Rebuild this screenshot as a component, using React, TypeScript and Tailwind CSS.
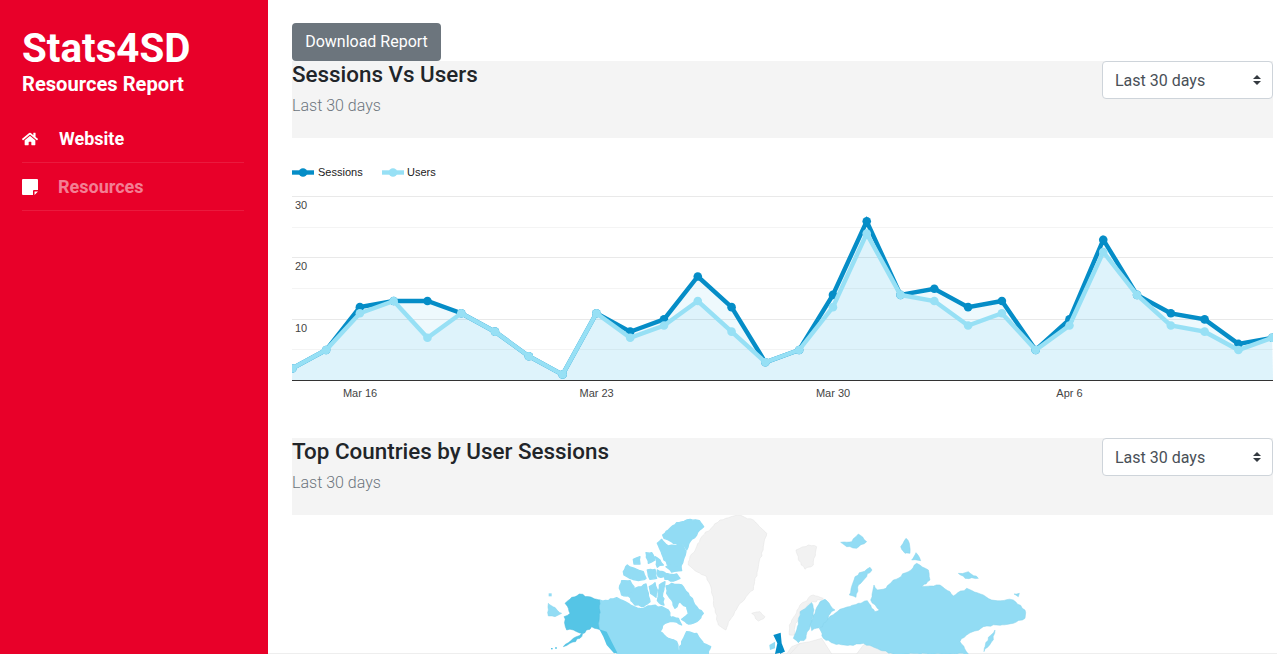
import { FaHome } from "react-icons/fa";

const SESSIONS = [2, 5, 12, 13, 13, 11, 8, 4, 1, 11, 8, 10, 17, 12, 3, 5, 14, 26, 14, 15, 12, 13, 5, 10, 23, 14, 11, 10, 6, 7];
const USERS = [2, 5, 11, 13, 7, 11, 8, 4, 1, 11, 7, 9, 13, 8, 3, 5, 12, 24, 14, 13, 9, 11, 5, 9, 21, 14, 9, 8, 5, 7];

const STEP = 33.79;
const px = (i: number) => 0.3 + i * STEP;
const py = (v: number) => 242.7 - v * 6.13;
const line = (vals: number[]) => vals.map((v, i) => `${px(i).toFixed(1)},${py(v).toFixed(1)}`).join(" ");

// traced from the reference, numbers are 3x crop coords (see the g transforms)
const NORTH_AMERICA = [
  "178,270 205,272 230,263 255,275 282,290 310,296 335,287 365,290 385,300 392,322 415,325 425,345 400,335 375,340 360,365 385,385 410,395 415,425 425,395 440,365 470,370 490,400 512,410 505,432 232,432 210,400 190,365 178,358",
  "368,75 385,60 410,38 440,30 478,32 491,50 470,75 450,95 440,120 425,100 400,100 385,90 372,85",
  "352,100 365,88 385,108 425,103 438,125 430,150 420,180 395,175 372,150",
  "378,228 395,220 425,225 445,250 470,290 490,310 470,335 445,342 425,328 445,312 440,290 420,275 405,295 395,270 380,250",
  "238,235 245,212 270,212 282,230 280,245 262,258 245,255",
  "265,258 285,235 305,230 318,222 325,250 330,275 310,290 285,285",
  "328,230 345,218 352,240 348,262 332,250",
  "358,225 375,215 368,250 372,285 352,272",
  "250,185 262,165 290,178 310,185 318,205 295,212 270,205 252,195",
  "322,180 345,178 350,205 330,208",
  "352,180 375,188 372,200 355,200",
  "370,190 410,192 420,205 400,213 375,208",
  "378,170 420,165 425,182 395,186",
  "318,128 335,128 345,150 325,160",
  "345,140 360,150 370,165 352,172",
  "280,148 300,140 300,162 282,162",
];

const RUSSIA_AREA = [
  "118,355 135,330 165,310 190,295 235,280 262,272 275,295 285,305 298,300 272,270 282,225 292,240 318,235 340,210 385,185 410,160 445,180 450,210 425,230 480,225 510,245 520,258 560,235 610,255 635,270 700,270 735,300 735,325 700,340 650,345 610,350 560,375 540,395 565,432 340,432 300,420 250,400 210,405 160,400 130,385",
  "208,255 225,200 270,172 276,180 235,225 228,262",
  "362,110 378,85 388,100 390,130 375,130",
  "395,150 408,128 422,152",
  "182,97 215,95 235,72 260,95 230,115 200,110",
  "535,190 565,185 595,205 555,205",
  "612,425 625,382 645,360 640,390",
  "702,252 718,250 715,260",
  "105,310 120,275 135,268 165,300 150,312 128,350 95,362 90,345",
  "60,305 95,278 102,300 95,335 78,385 55,398 40,385 52,350",
];

// breaks long edges up so the coast looks less like straight cuts
function rough(points: string): string {
  const pts = points.split(" ").map((p) => p.split(",").map(Number));
  const out: string[] = [];
  pts.forEach(([x, y], i) => {
    const [nx, ny] = pts[(i + 1) % pts.length];
    const n = Math.max(1, Math.round(Math.hypot(nx - x, ny - y) / 9));
    for (let k = 0; k < n; k++) {
      const t = k / n;
      const seed = Math.sin((x + k) * 12.9898 + (y + k) * 78.233) * 43758.5453;
      const j = k === 0 ? 0 : (seed - Math.floor(seed) - 0.5) * 5;
      const jy = k === 0 ? 0 : ((seed * 7 - Math.floor(seed * 7)) - 0.5) * 5;
      out.push(`${(x + (nx - x) * t + j).toFixed(1)},${(y + (ny - y) * t + jy).toFixed(1)}`);
    }
  });
  return out.join(" ");
}

function ChartBlock() {
  const area = `0,242 ${line(USERS)} 981,242`;
  const areaSessions = `0,242 ${line(SESSIONS)} 981,242`;
  return (
    <svg width="981" height="300" viewBox="0 0 981 300" className="block" fontFamily="'Liberation Sans', Arial, sans-serif" fontSize="11">
      <line x1="0" x2="22" y1="34.5" y2="34.5" stroke="#058dc7" strokeWidth="4.4" />
      <circle cx="11" cy="34.5" r="4.3" fill="#058dc7" />
      <text x="26" y="38" fill="#222">Sessions</text>
      <line x1="90" x2="112" y1="34.5" y2="34.5" stroke="#97e0f5" strokeWidth="4.4" />
      <circle cx="101" cy="34.5" r="4.3" fill="#97e0f5" />
      <text x="115" y="38" fill="#222">Users</text>

      {[58.5, 119.5, 181.5].map((y) => (
        <line key={y} x1="0" x2="981" y1={y} y2={y} stroke="#e9e9e9" />
      ))}
      {[89.5, 150.5, 211.5].map((y) => (
        <line key={y} x1="0" x2="981" y1={y} y2={y} stroke="#f4f4f4" />
      ))}

      <polygon points={areaSessions} fill="#0ea5e0" fillOpacity="0.07" />
      <polygon points={area} fill="#0ea5e0" fillOpacity="0.07" />

      <polyline points={line(SESSIONS)} fill="none" stroke="#058dc7" strokeWidth="4.4" />
      {SESSIONS.map((v, i) => (
        <circle key={i} cx={px(i)} cy={py(v)} r="4.3" fill="#058dc7" />
      ))}
      <polyline points={line(USERS)} fill="none" stroke="#97e0f5" strokeWidth="4.4" />
      {USERS.map((v, i) => (
        <circle key={i} cx={px(i)} cy={py(v)} r="4.3" fill="#97e0f5" />
      ))}

      <line x1="0" x2="981" y1="242.5" y2="242.5" stroke="#333" strokeWidth="1" />

      <text x="3" y="71" fill="#444">30</text>
      <text x="3" y="132" fill="#444">20</text>
      <text x="3" y="194" fill="#444">10</text>
      <text x="68" y="259" fill="#444" textAnchor="middle">Mar 16</text>
      <text x="304.6" y="259" fill="#444" textAnchor="middle">Mar 23</text>
      <text x="541" y="259" fill="#444" textAnchor="middle">Mar 30</text>
      <text x="777.5" y="259" fill="#444" textAnchor="middle">Apr 6</text>
    </svg>
  );
}

function WorldMap() {
  return (
    <svg width="981" height="139" viewBox="292 515 981 139" className="block">
      <g transform="translate(540 510) scale(0.33333)" strokeWidth="1.5">
        <polygon
          points={rough("445,155 450,140 470,110 485,80 540,30 600,15 640,30 680,70 670,110 655,170 640,240 600,280 570,330 558,360 535,345 520,280 515,240 500,200 470,185 445,165")}
          fill="#f2f2f2"
          stroke="#e2e2e2"
        />
        <polygon points={rough("635,310 660,305 675,320 655,333")} fill="#f2f2f2" stroke="#e2e2e2" />
        {NORTH_AMERICA.map((p) => (
          <polygon key={p} points={rough(p)} fill="#92dcf4" stroke="#92dcf4" strokeWidth="4" strokeLinejoin="round" />
        ))}
        <polygon points="178,358 200,365 215,395 232,428 222,430 200,405 190,380" fill="#55c5e6" />
        <polygon points={rough("25,280 65,310 45,320 25,318")} fill="#92dcf4" stroke="#86d2ea" />
        <rect x="26" y="250" width="9" height="9" fill="#92dcf4" />
        <rect x="33" y="414" width="5" height="4" fill="#55c5e6" />
        <rect x="45" y="412" width="6" height="4" fill="#55c5e6" />
        <polygon
          points={rough("75,280 95,262 118,252 178,270 178,358 155,350 135,368 120,385 90,400 70,410 100,385 125,370 100,360 80,360 72,320 90,310 85,295")}
          fill="#55c5e6"
          stroke="#4cbbdc"
        />
        <polygon points="688,405 705,395 705,415 690,420" fill="#92dcf4" />
        <polygon points="700,375 722,368 725,400 735,425 705,432 712,400" fill="#058dc7" />
        <polygon points="740,432 755,410 780,400 780,432" fill="#f2f2f2" stroke="#e2e2e2" />
      </g>
      <g transform="translate(780 510) scale(0.33333)" strokeWidth="1.5">
        <polygon points={rough("48,120 85,105 110,110 100,165 75,178 55,150")} fill="#f2f2f2" stroke="#e2e2e2" />
        <polygon points={rough("28,345 60,285 100,255 130,265 90,280 60,310 45,350 45,375 28,375")} fill="#f2f2f2" stroke="#e2e2e2" />
        <polygon points="30,432 60,400 90,395 125,385 155,432" fill="#f2f2f2" stroke="#e2e2e2" />
        <polygon points="230,432 250,405 280,395 310,410 340,432" fill="#f2f2f2" stroke="#e2e2e2" />
        {RUSSIA_AREA.map((p) => (
          <polygon key={p} points={rough(p)} fill="#92dcf4" stroke="#86d2ea" />
        ))}
        <polygon points="0,395 12,425 0,432" fill="#058dc7" />
      </g>
    </svg>
  );
}

function SectionHeader({ title }: { title: string }) {
  return (
    <div className="flex h-[77px] justify-between bg-[#f4f4f4]">
      <div>
        <h2 className="text-[22.4px] leading-[27px] font-medium text-[#212529]">{title}</h2>
        <p className="mt-[6px] text-[16px] leading-6 font-light text-[#6c757d]">Last 30 days</p>
      </div>
      <div className="relative h-[38px] w-[171px]">
        <select className="h-full w-full appearance-none rounded border border-[#ced4da] bg-white px-3 pt-[2px] text-[16px] text-[#495057]">
          <option>Last 30 days</option>
        </select>
        <svg className="pointer-events-none absolute top-[14px] right-[12px]" width="8" height="10" viewBox="0 0 8 10">
          <path d="M4 0 L8 4 H0 Z M0 6 H8 L4 10 Z" fill="#343a40" />
        </svg>
      </div>
    </div>
  );
}

export default function App() {
  return (
    <div className="flex h-[654px] overflow-hidden bg-white font-['Roboto',sans-serif]">
      <aside className="w-[268px] shrink-0 bg-[#e80029] pt-[25px] pr-[24px] pl-[22px] text-white">
        <h1 className="text-[40.3px] leading-[48px] font-bold">Stats4SD</h1>
        <h2 className="-mt-px text-[20.15px] leading-6 font-bold">Resources Report</h2>
        <nav className="mt-[19px]">
          <a className="flex h-[48px] items-center gap-[21px] border-b border-white/10 text-[18px] font-bold">
            <FaHome className="h-[16px] w-[16px]" />
            Website
          </a>
          <a className="flex h-[48px] items-center gap-[20px] border-b border-white/10 text-[18px] font-bold text-white/50">
            <svg width="16" height="16" viewBox="0 0 16 16" className="shrink-0">
              <path d="M0 1a1 1 0 0 1 1-1h14a1 1 0 0 1 1 1v10h-4a1 1 0 0 0-1 1v4H1a1 1 0 0 1-1-1ZM12.5 12.5H16L12.5 16Z" fill="#fff" />
            </svg>
            Resources
          </a>
        </nav>
      </aside>
      <main className="min-w-0 flex-1 border-b border-[#eee] pt-[23px] pr-[4px] pl-[24px]">
        <button className="block h-[38px] w-[149px] rounded bg-[#6c757d] text-[16px] text-white">Download Report</button>
        <SectionHeader title="Sessions Vs Users" />
        <ChartBlock />
        <SectionHeader title="Top Countries by User Sessions" />
        <WorldMap />
      </main>
    </div>
  );
}
